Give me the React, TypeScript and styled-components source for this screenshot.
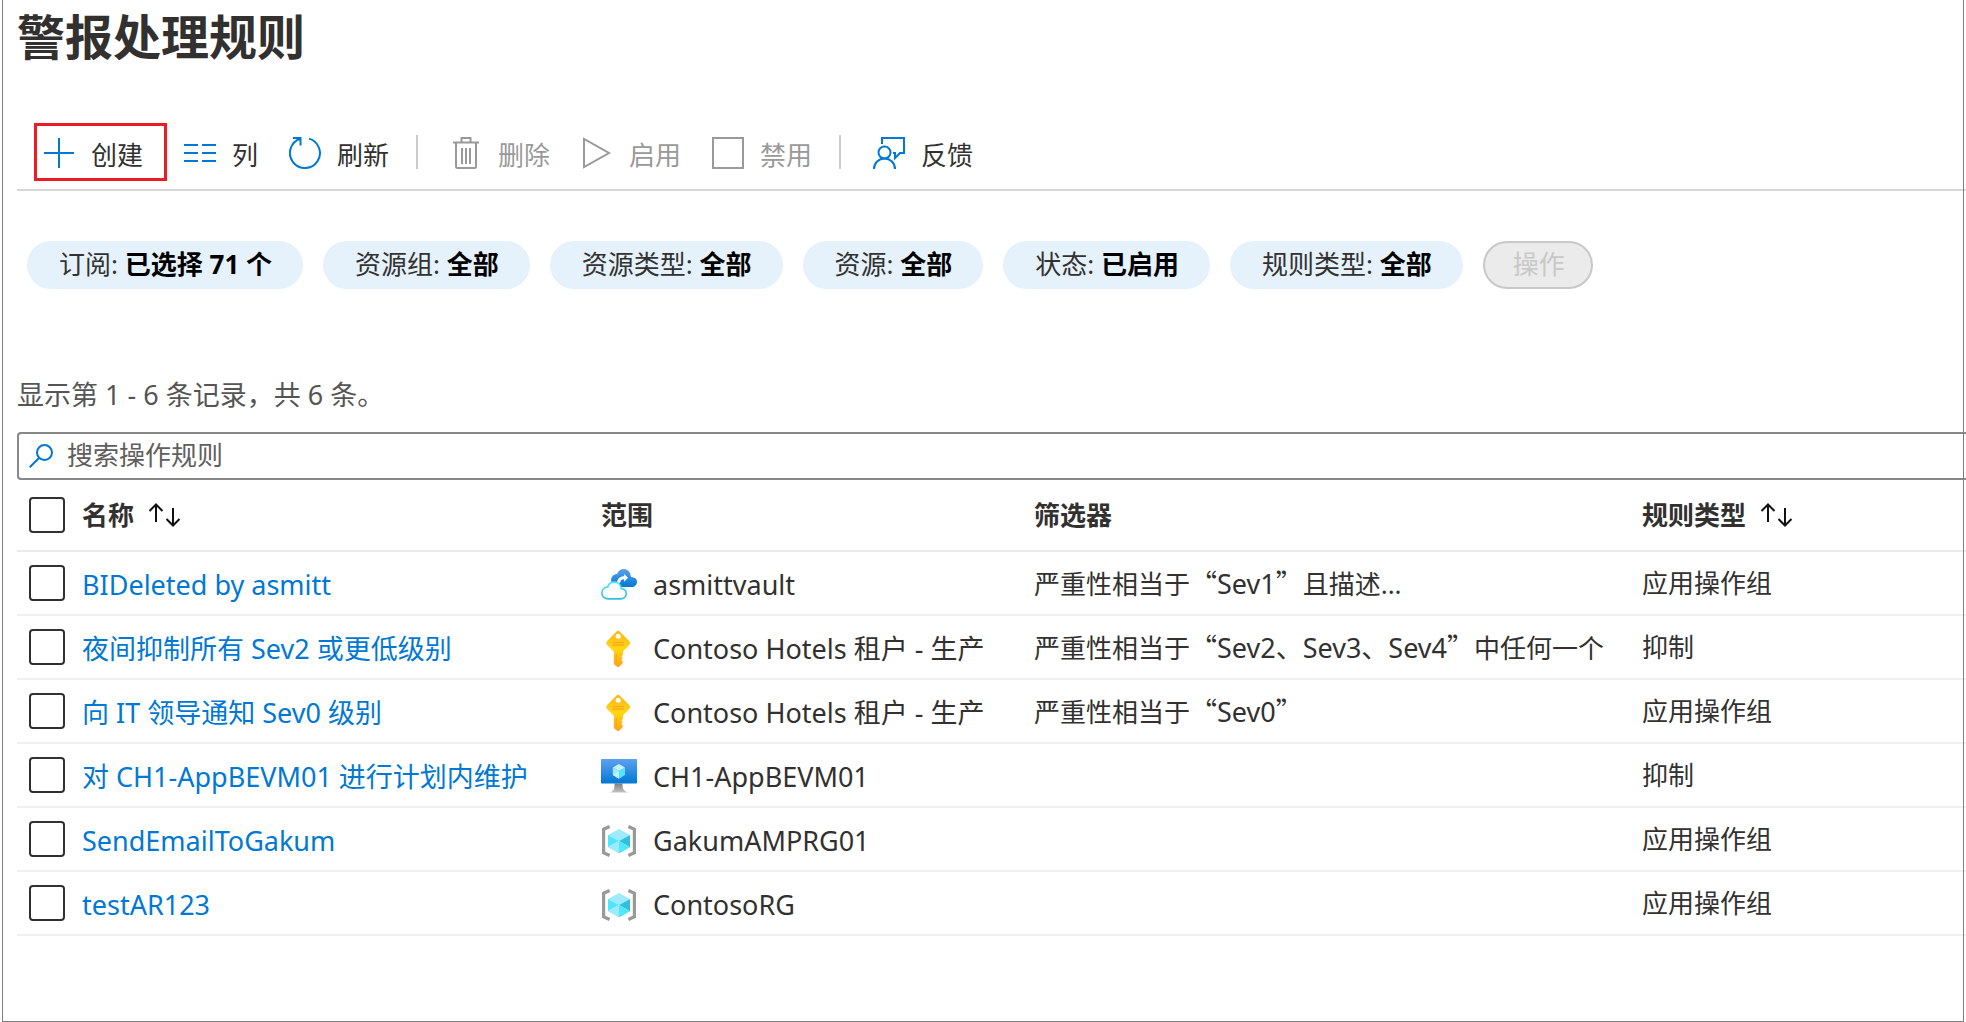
import React from "react";
import styled, { createGlobalStyle, css } from "styled-components";

const LATIN = `"Noto Sans", "Noto Sans CJK SC", sans-serif`;
const HAN = `"Noto Sans CJK SC", "Noto Sans", sans-serif`;
const BLUE = "#0078d4";
const INK = "#323130";

const GlobalStyle = createGlobalStyle`
  *, *::before, *::after { box-sizing: border-box; }
  html { overflow-x: hidden; }
  body {
    margin: 0;
    overflow-x: hidden;
    background: #fff;
    color: ${INK};
    font: 26px/36px ${LATIN};
  }
  button, input { font: inherit; color: inherit; }
`;

const Page = styled.main`
  position: relative;
  min-height: 100vh;
  padding: 0 0 80px 17px;

  &::after {
    content: "";
    position: absolute;
    inset: 0 2px 0 2px;
    border: solid #7f7f7f;
    border-width: 0 1px 1px;
    pointer-events: none;
  }
`;

const Title = styled.h1`
  margin: 0;
  padding-bottom: 55px;
  font: bold 48px/68px ${HAN};
`;

const Toolbar = styled.div`
  display: flex;
  align-items: center;
  height: 68px;
  padding: 0 17px 8px;
  border-bottom: 2px solid #d6d6d6;
`;

const Command = styled.button<{ $highlighted?: boolean }>`
  display: flex;
  align-items: center;
  gap: 16px;
  height: 58px;
  padding: 2px 16px 0 15px;
  border: 0;
  background: none;
  white-space: nowrap;

  ${(p) =>
    p.$highlighted &&
    css`
      margin-right: 2px;
      padding: 2px 21px 0 6px;
      border: 3px solid #ed1c24;
    `}

  svg { color: ${BLUE}; }

  &:disabled, &:disabled svg { color: #999; }
`;

const CommandLabel = styled.span`
  padding-top: 4px;
`;

const CommandIcon = styled.svg.attrs({ viewBox: "0 0 32 32", "aria-hidden": true })`
  flex: none;
  width: 32px;
  height: 32px;
  fill: none;
  stroke: currentColor;
  stroke-width: 2;
`;

const Separator = styled.span`
  width: 2px;
  height: 34px;
  margin: 0 17px 0 11px;
  background: #ccc;
`;

const Filters = styled.div`
  display: flex;
  flex-wrap: wrap;
  gap: 20px;
  padding: 50px 10px 0;
`;

const Pill = styled.button`
  height: 48px;
  padding: 0 31px 2px 32px;
  border: 0;
  border-radius: 24px;
  background: #e5f1fb;
  white-space: nowrap;

  strong { color: #000; }

  &:disabled {
    padding: 0 26px 2px 28px;
    border: 2px solid #c8c8c8;
    background: #ebebeb;
    color: #c8c8c8;
  }
`;

const Summary = styled.p`
  margin: 0;
  padding: 88px 0 19px;
  color: #555;
  font-size: 27px;
`;

const SearchBox = styled.label`
  display: flex;
  align-items: center;
  gap: 14px;
  height: 48px;
  padding-left: 10px;
  border: 2px solid #888;
  border-right: 0;
  border-radius: 4px 0 0 4px;
`;

const SearchIcon = styled.svg`
  flex: none;
  width: 24px;
  height: 24px;
  fill: none;
  stroke: ${BLUE};
  stroke-width: 2;
`;

const SearchInput = styled.input`
  flex: 1;
  min-width: 0;
  height: 40px;
  padding: 0 0 2px;
  border: 0;
  outline: 0;
  background: none;

  &::placeholder { color: #605e5c; opacity: 1; }
`;

const Table = styled.table`
  width: 100%;
  table-layout: fixed;
  border-collapse: separate;
  border-spacing: 0;
`;

const Col = styled.col<{ $width?: number }>`
  width: ${(p) => (p.$width ? `${p.$width}px` : "auto")};
`;

const HeadCell = styled.th`
  height: 72px;
  padding: 0;
  border-bottom: 2px solid #eaeaea;
  text-align: left;
  font-weight: bold;
  vertical-align: middle;
`;

const Cell = styled.td<{ $large?: boolean }>`
  height: 64px;
  padding: ${(p) => (p.$large ? "4px 0 0" : "0")};
  border-bottom: 2px solid #f0f0f0;
  font-size: ${(p) => (p.$large ? "27px" : "26px")};
  white-space: nowrap;
  vertical-align: middle;
`;

const Tick = styled.input.attrs({ type: "checkbox" })`
  display: block;
  appearance: none;
  width: 36px;
  height: 36px;
  margin: 0 0 0 12px;
  border: 2px solid ${INK};
  border-radius: 4px;
  background: #fff;

  &:checked { background: ${BLUE}; }
`;

const SortButton = styled.button`
  display: flex;
  align-items: center;
  gap: 15px;
  padding: 0;
  border: 0;
  background: none;
  font-weight: bold;
`;

const SortIcon = styled.svg`
  width: 32px;
  height: 24px;
  fill: none;
  stroke: #111;
  stroke-width: 2;
`;

const RuleLink = styled.a`
  color: ${BLUE};
  text-decoration: none;
`;

const Scope = styled.div`
  display: flex;
  align-items: center;
  gap: 16px;
`;

const ScopeSvg = styled.svg.attrs({ viewBox: "0 0 36 36", "aria-hidden": true })`
  flex: none;
  width: 36px;
  height: 36px;
`;

const Condition = styled.span`
  font-size: 27px;
`;

const Quote = styled.span`
  font-family: ${HAN};
`;

const SortArrows = () => (
  <SortIcon viewBox="0 0 32 24" aria-hidden="true">
    <path d="M7 1v18M.5 8 7 1.500 13.500 8M24 5v18M17.500 16l6.500 6.500 6.500-6.500" />
  </SortIcon>
);

const VaultIcon = () => (
  <ScopeSvg>
    <defs>
      <linearGradient id="vault" x2="0" y2="1">
        <stop stopColor="#5ea0ef" />
        <stop offset="1" stopColor="#0078d4" />
      </linearGradient>
      <linearGradient id="vaultEdge" x2="0" y2="1">
        <stop stopColor="#50e6ff" />
        <stop offset="1" stopColor="#32bedd" />
      </linearGradient>
    </defs>
    <path fill="url(#vault)" d="M30 10C29.600 5 26.500 2 23 2c-3.300 0-5.800 2-6.700 4.800-3.500.4-6.200 3-6.200 6.500 0 4 3 6.700 6.800 6.700h13.300c3.400 0 5.800-2.200 5.800-5.300 0-3-2.500-4.500-6-4.700z" />
    <path fill="#fff" d="M27 10.800 23 7v2.300c-3.800 0-6.500 2.200-7 6.700h3c.6-2.800 1.600-3.800 4-3.800v2.500z" />
    <path fill="#fff" stroke="url(#vaultEdge)" strokeWidth="1.700" d="M20.300 21.700c-.4-4-3.400-6.600-7-6.600-3.200 0-5.700 1.900-6.600 4.800C3.300 20.200.9 22.600.9 25.800c0 3.700 2.700 6 6.400 6h12.400c3.200 0 5.500-2 5.500-5 0-2.900-2.100-4.800-4.900-5.100z" />
  </ScopeSvg>
);

const KeyIcon = () => (
  <ScopeSvg>
    <defs>
      <linearGradient id="keyFill" x2="0" y2="1">
        <stop stopColor="#fcb41d" />
        <stop offset=".5" stopColor="#ffd70f" />
        <stop offset="1" stopColor="#faa21d" />
      </linearGradient>
    </defs>
    <path fill="url(#keyFill)" d="M15.500.6 6.200 10c-1.300 1.300-1.300 2.700 0 4l6.600 6.400V33l3 2.600c.9.700 1.600.7 2.500 0l3.400-3.400v-2l-1.400-1.400 1.600-1.700-1.600-1.600 1.600-1.600v-3.300l6.200-6.600c1.300-1.300 1.300-2.700 0-4L18.700.6c-1-1-2.200-1-3.200 0z" />
    <circle cx="17.200" cy="5.300" r="2.500" fill="#fff" />
    <path fill="none" stroke="#fba419" strokeWidth="1.300" d="M11.500 11.700h11.500M11.500 14.200h11.500M15.300 23v9.500" />
  </ScopeSvg>
);

const MachineIcon = () => (
  <ScopeSvg>
    <defs>
      <linearGradient id="screen" x2="0" y2="1">
        <stop stopColor="#5ea0ef" />
        <stop offset="1" stopColor="#0078d4" />
      </linearGradient>
      <linearGradient id="stand" x2="0" y2="1">
        <stop stopColor="#808080" />
        <stop offset="1" stopColor="#c4c4c4" />
      </linearGradient>
    </defs>
    <path fill="url(#stand)" d="M13.500 24.500h8c0 5 .5 7 5.500 9H9c4.500-2 4.500-4 4.500-9z" />
    <rect width="36" height="24.500" rx=".8" fill="url(#screen)" />
    <path fill="#50e6ff" d="M24 8.500v7.600L17.900 19.700v-7.600z" />
    <path fill="#c3f1ff" d="m24 8.500-6.100 3.600-6.100-3.600L17.900 5z" />
    <path fill="#9cebff" d="M17.900 12.100v7.600l-6.100-3.600V8.500z" />
    <path fill="#c3f1ff" d="m11.800 16.100 6.100-4v7.600z" />
  </ScopeSvg>
);

const GroupIcon = () => (
  <ScopeSvg>
    <path fill="none" stroke="#999" strokeWidth="3.200" d="M8.600 3.500 2.600 6.300v23.400l6 2.800M27.400 3.500l6 2.800v23.400l-6 2.800" />
    <path fill="#9cebff" d="M18 6 29 12 18 18 7 12z" />
    <path fill="#50e6ff" d="M7 12l11 6-11 6.200z" />
    <path fill="#32bedd" d="M29 12v12.200L18 18z" />
    <path fill="#9cebff" d="M7 24.200 18 18v12.500z" />
    <path fill="#50e6ff" d="M29 24.200 18 18v12.500z" />
  </ScopeSvg>
);

const filters = [
  ["订阅", "已选择 71 个"],
  ["资源组", "全部"],
  ["资源类型", "全部"],
  ["资源", "全部"],
  ["状态", "已启用"],
  ["规则类型", "全部"],
];

type Rule = {
  name: string;
  icon: React.FC;
  scope: string;
  filter?: { quoted: string; rest?: string };
  type: string;
};

const rules: Rule[] = [
  { name: "BIDeleted by asmitt", icon: VaultIcon, scope: "asmittvault", filter: { quoted: "Sev1", rest: "且描述..." }, type: "应用操作组" },
  { name: "夜间抑制所有 Sev2 或更低级别", icon: KeyIcon, scope: "Contoso Hotels 租户 - 生产", filter: { quoted: "Sev2、Sev3、Sev4", rest: "中任何一个" }, type: "抑制" },
  { name: "向 IT 领导通知 Sev0 级别", icon: KeyIcon, scope: "Contoso Hotels 租户 - 生产", filter: { quoted: "Sev0" }, type: "应用操作组" },
  { name: "对 CH1-AppBEVM01 进行计划内维护", icon: MachineIcon, scope: "CH1-AppBEVM01", type: "抑制" },
  { name: "SendEmailToGakum", icon: GroupIcon, scope: "GakumAMPRG01", type: "应用操作组" },
  { name: "testAR123", icon: GroupIcon, scope: "ContosoRG", type: "应用操作组" },
];

export default function App() {
  return (
    <Page lang="zh-CN">
      <GlobalStyle />
      <Title>警报处理规则</Title>

      <Toolbar role="toolbar">
        <Command $highlighted>
          <CommandIcon><path d="M16 1v30M1 16h30" /></CommandIcon>
          <CommandLabel>创建</CommandLabel>
        </Command>
        <Command>
          <CommandIcon><path d="M0 8h14M18 8h14M0 16h14M18 16h14M0 24h14M18 24h14" /></CommandIcon>
          <CommandLabel>列</CommandLabel>
        </Command>
        <Command>
          <CommandIcon><path d="M20 1.600A15 15 0 1 1 11.500 1.700M4 1h7.500v7.500" /></CommandIcon>
          <CommandLabel>刷新</CommandLabel>
        </Command>
        <Separator />
        <Command disabled>
          <CommandIcon><path d="M3 5.500h26M11.500 5V1h9v4M6 6v23.500q0 1.500 1.500 1.500h17q1.500 0 1.500-1.500V6M12 11v16M16 11v16M20 11v16" /></CommandIcon>
          <CommandLabel>删除</CommandLabel>
        </Command>
        <Command disabled>
          <CommandIcon><path d="M3 2v28l25-14z" /></CommandIcon>
          <CommandLabel>启用</CommandLabel>
        </Command>
        <Command disabled>
          <CommandIcon><path d="M1 1h30v30H1z" /></CommandIcon>
          <CommandLabel>禁用</CommandLabel>
        </Command>
        <Separator />
        <Command>
          <CommandIcon>
            <path d="M9 7V1h22v15h-4l-5 5v-5h-2" />
            <circle cx="11.500" cy="15.500" r="6" />
            <path d="M1 32a10.500 10.500 0 0 1 21 0" />
          </CommandIcon>
          <CommandLabel>反馈</CommandLabel>
        </Command>
      </Toolbar>

      <Filters>
        {filters.map(([label, value]) => (
          <Pill key={label}>
            {label}: <strong>{value}</strong>
          </Pill>
        ))}
        <Pill disabled>操作</Pill>
      </Filters>

      <Summary>显示第 1 - 6 条记录，共 6 条。</Summary>

      <SearchBox>
        <SearchIcon viewBox="0 0 24 24" aria-hidden="true">
          <circle cx="15.500" cy="8.500" r="7.500" />
          <path d="M10 14 .7 23.300" />
        </SearchIcon>
        <SearchInput type="text" placeholder="搜索操作规则" aria-label="搜索操作规则" />
      </SearchBox>

      <Table>
        <colgroup>
          <Col $width={65} />
          <Col $width={519} />
          <Col $width={433} />
          <Col $width={608} />
          <Col />
        </colgroup>
        <thead>
          <tr>
            <HeadCell><Tick aria-label="全选" /></HeadCell>
            <HeadCell><SortButton>名称<SortArrows /></SortButton></HeadCell>
            <HeadCell>范围</HeadCell>
            <HeadCell>筛选器</HeadCell>
            <HeadCell><SortButton>规则类型<SortArrows /></SortButton></HeadCell>
          </tr>
        </thead>
        <tbody>
          {rules.map(({ name, icon: Icon, scope, filter, type }) => (
            <tr key={name}>
              <Cell><Tick aria-label={name} /></Cell>
              <Cell $large><RuleLink href="#">{name}</RuleLink></Cell>
              <Cell $large>
                <Scope>
                  <Icon />
                  {scope}
                </Scope>
              </Cell>
              <Cell>
                {filter && (
                  <>
                    严重性相当于
                    <Condition>
                      <Quote>“</Quote>{filter.quoted}<Quote>”</Quote>
                    </Condition>
                    {filter.rest}
                  </>
                )}
              </Cell>
              <Cell>{type}</Cell>
            </tr>
          ))}
        </tbody>
      </Table>
    </Page>
  );
}
